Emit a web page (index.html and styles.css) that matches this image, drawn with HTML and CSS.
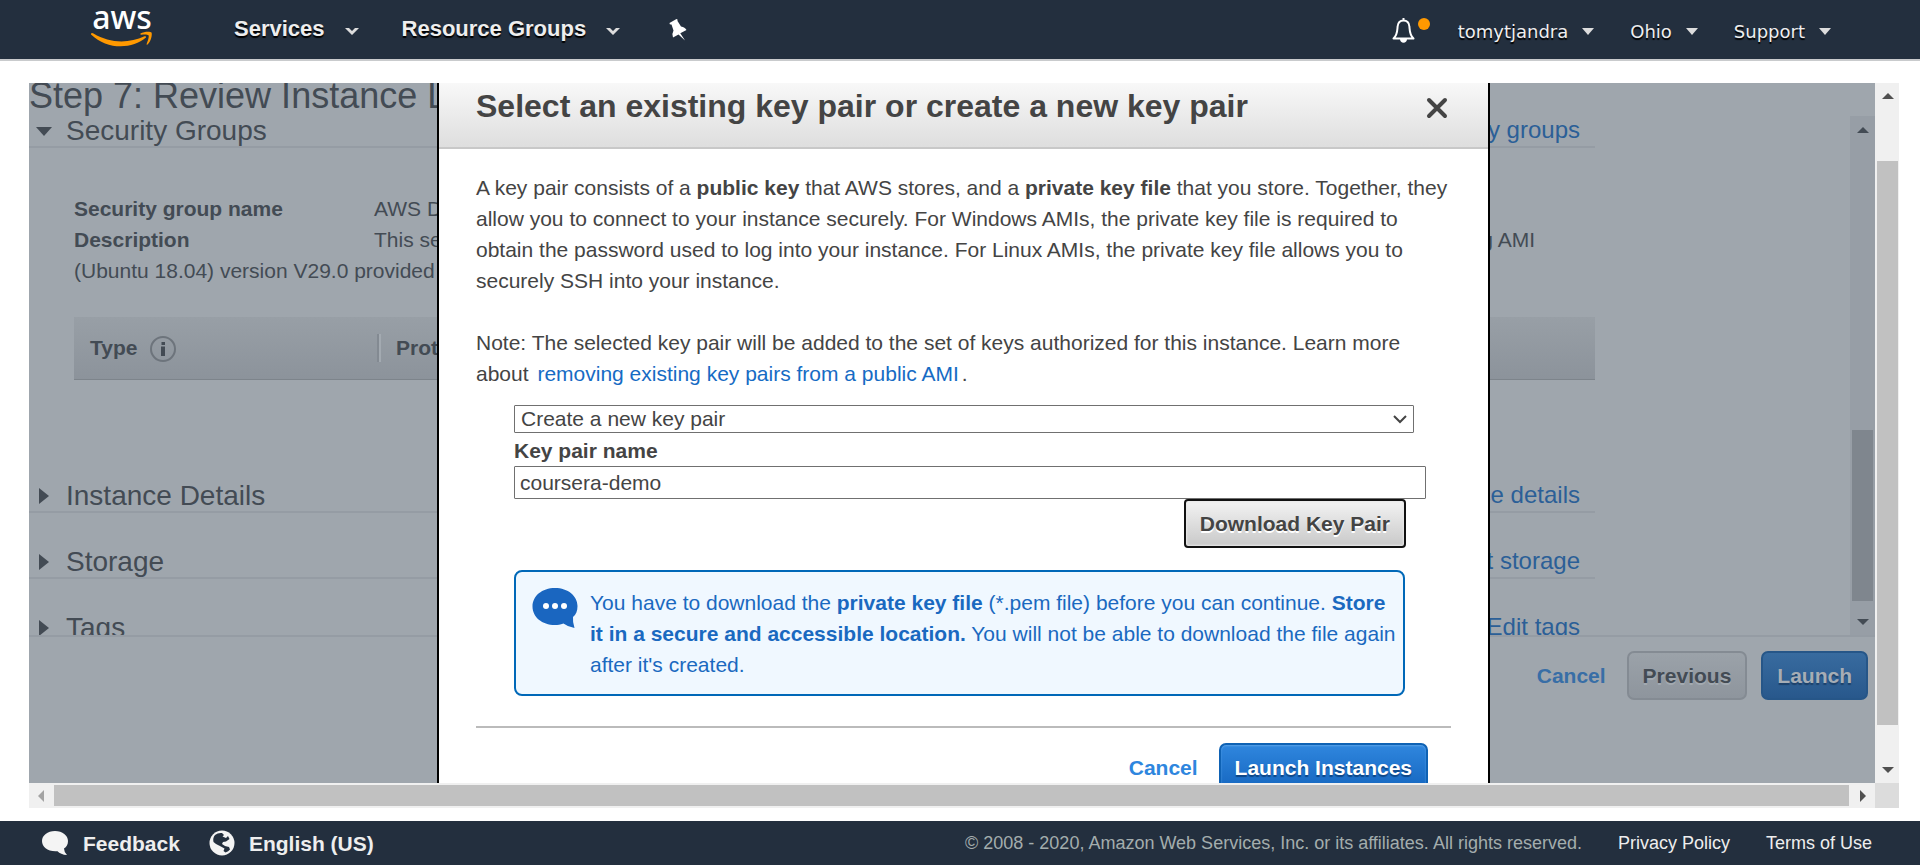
FILE: index.html
```html
<!DOCTYPE html>
<html lang="en">
<head>
<meta charset="utf-8">
<title>Launch instance - Review</title>
<link rel="stylesheet" href="styles.css">
</head>
<body>
<header class="topbar">
  <a class="logo" href="#" aria-label="aws home">
    <svg width="64" height="44" viewBox="0 0 64 44">
      <text class="logo-word" x="32" y="26" text-anchor="middle">aws</text>
      <path class="logo-smile" d="M1 30.500 Q2 29.500 3.500 30.500 C20 40.500 39 40.500 54.500 33.200 Q56.500 32.800 56 34.600 C42 46.500 17 47 1 31.500Z"/>
      <path class="logo-smile" d="M50.500 30.600 C54 28.200 60.500 28.200 61.500 29.500 C62.500 31.500 61 38.500 57.500 41.500 C56.800 42 56.300 41.700 56.700 40.800 C58 37.500 59.300 33.500 58.500 32.300 C57.500 31.200 54 31.400 51.200 31.700 C50.300 31.700 50 31.100 50.500 30.600Z"/>
    </svg>
  </a>
  <nav class="main-menu">
    <button class="menu-button" type="button">Services
      <svg width="14" height="8" viewBox="0 0 14 8"><path d="M0 1 H4 L7 4 L10 1 H14 L7 8Z"/></svg>
    </button>
    <button class="menu-button" type="button">Resource Groups
      <svg width="14" height="8" viewBox="0 0 14 8"><path d="M0 1 H4 L7 4 L10 1 H14 L7 8Z"/></svg>
    </button>
    <button class="menu-button" type="button" aria-label="Pin shortcuts">
      <svg class="pin" width="20" height="24" viewBox="0 0 20 24"><path d="M1.500 5 L8.500 1 Q10 1 9.500 3 L13 8.500 Q17 9 18.500 12 L12.300 15.300 L17 22.500 L10.500 16.500 L5 19.500 Q3.500 16 5.500 12.500 L3.500 6.500 Q1.500 7 1.500 5Z"/></svg>
    </button>
  </nav>
  <nav class="account-menu">
    <button class="bell" type="button" aria-label="Notifications">
      <svg width="40" height="28" viewBox="0 0 40 28">
        <path class="bell-line" d="M2.500 22.500 C6.500 19 6.200 15 6.600 10.500 C7 6.500 9 4.500 12.500 4.500 C16 4.500 18 6.500 18.400 10.500 C18.800 15 18.500 19 22.500 22.500Z M12.500 4.500 V2"/>
        <path class="bell-clap" d="M9 23 H16 C16 28 9 28 9 23Z"/>
        <circle class="bell-dot" cx="33" cy="8" r="6"/>
      </svg>
    </button>
    <button class="account-button" type="button">tomytjandra
      <svg width="12" height="7" viewBox="0 0 12 7"><path d="M0 0 H12 L6 7Z"/></svg>
    </button>
    <button class="account-button" type="button">Ohio
      <svg width="12" height="7" viewBox="0 0 12 7"><path d="M0 0 H12 L6 7Z"/></svg>
    </button>
    <button class="account-button" type="button">Support
      <svg width="12" height="7" viewBox="0 0 12 7"><path d="M0 0 H12 L6 7Z"/></svg>
    </button>
  </nav>
</header>

<main class="workspace">
  <div class="frame">
    <div class="view">
      <h1 class="page-title">Step 7: Review Instance Launch</h1>
      <div class="review">
        <div class="review-content">
          <section class="group">
            <div class="group-head">
              <h2 class="group-title"><span class="tri tri-down"></span>Security Groups</h2>
              <a class="edit-link" href="#">Edit security groups</a>
            </div>
            <div class="group-body">
              <p class="fact"><b class="fact-name">Security group name</b>AWS Deep Learning AMI</p>
              <p class="fact"><b class="fact-name">Description</b>This security group was generated by AWS Marketplace and is based on recommended settings for AWS Deep Learning AMI (Ubuntu 18.04) version V29.0 provided by Amazon Web Services</p>
              <table class="rules">
                <thead>
                  <tr>
                    <th>Type <svg class="info" width="26" height="26" viewBox="0 0 26 26"><circle cx="13" cy="13" r="12"/><path d="M11 10.500 H15 V20 H11Z M11.500 6 H15 V9 H11.500Z"/></svg></th>
                    <th>Protocol</th>
                    <th>Port Range</th>
                    <th>Source</th>
                  </tr>
                </thead>
              </table>
            </div>
          </section>
          <section class="group">
            <div class="group-head">
              <h2 class="group-title"><span class="tri tri-right"></span>Instance Details</h2>
              <a class="edit-link" href="#">Edit instance details</a>
            </div>
          </section>
          <section class="group">
            <div class="group-head">
              <h2 class="group-title"><span class="tri tri-right"></span>Storage</h2>
              <a class="edit-link" href="#">Edit storage</a>
            </div>
          </section>
          <section class="group">
            <div class="group-head">
              <h2 class="group-title"><span class="tri tri-right"></span>Tags</h2>
              <a class="edit-link" href="#">Edit tags</a>
            </div>
          </section>
        </div>
        <div class="bar bar-dim">
          <span class="arrow arrow-up"></span>
          <span class="thumb thumb-review"></span>
          <span class="arrow arrow-down"></span>
        </div>
      </div>
      <div class="wizard-actions">
        <a class="cancel cancel-dim" href="#">Cancel</a>
        <button class="btn btn-dim" type="button">Previous</button>
        <button class="btn btn-dim-primary" type="button">Launch</button>
      </div>

      <div class="modal" role="dialog" aria-labelledby="modal-title">
        <div class="modal-head">
          <h2 class="modal-title" id="modal-title">Select an existing key pair or create a new key pair</h2>
          <button class="close" type="button" aria-label="Close">
            <svg width="22" height="22" viewBox="0 0 22 22"><path d="M3 3 L19 19 M19 3 L3 19"/></svg>
          </button>
        </div>
        <div class="modal-body">
          <p class="para">A key pair consists of a <b>public key</b> that AWS stores, and a <b>private key file</b> that you store. Together, they allow you to connect to your instance securely. For Windows AMIs, the private key file is required to obtain the password used to log into your instance. For Linux AMIs, the private key file allows you to securely SSH into your instance.</p>
          <p class="para">Note: The selected key pair will be added to the set of keys authorized for this instance. Learn more about <a class="doc-link" href="#">removing existing key pairs from a public AMI</a>.</p>
          <form class="form">
            <div class="select-wrap">
              <select class="select" aria-label="Key pair choice"><option>Create a new key pair</option></select>
              <svg class="select-arrow" width="14" height="9" viewBox="0 0 14 9"><path d="M1 1 L7 7 L13 1"/></svg>
            </div>
            <label class="label" for="key-name">Key pair name</label>
            <input class="input" id="key-name" type="text" value="coursera-demo">
            <button class="btn btn-download" type="button">Download Key Pair</button>
            <div class="notice">
              <svg class="notice-icon" width="46" height="42" viewBox="0 0 46 42">
                <path d="M23 1 C36 1 45.500 9 45.500 19 C45.500 24 44 27.500 41 30 Q40.500 35 42.500 41 Q36 40 31.500 36.500 C28 37.800 26 38 23 38 C10 38 .5 30 .5 19.500 C.5 9 10 1 23 1Z"/>
                <circle cx="14" cy="19" r="3"/><circle cx="23" cy="19" r="3"/><circle cx="32" cy="19" r="3"/>
              </svg>
              <p class="notice-text">You have to download the <b>private key file</b> (*.pem file) before you can continue. <b>Store it in a secure and accessible location.</b> You will not be able to download the file again after it's created.</p>
            </div>
          </form>
          <div class="modal-actions">
            <a class="cancel" href="#">Cancel</a>
            <button class="btn btn-primary" type="button">Launch Instances</button>
          </div>
        </div>
      </div>
    </div>
    <div class="bar">
      <span class="arrow arrow-up"></span>
      <span class="thumb thumb-page"></span>
      <span class="arrow arrow-down"></span>
    </div>
    <div class="bar bar-across">
      <span class="arrow arrow-left"></span>
      <span class="thumb"></span>
      <span class="arrow arrow-right"></span>
    </div>
    <div class="corner"></div>
  </div>
</main>

<footer class="footer">
  <a class="foot-link" href="#">
    <svg width="27" height="26" viewBox="0 0 27 26"><path d="M13 1 C20.500 1 26 5.500 26 11 C26 14.500 24.500 17 22 18.500 Q22 22 25 25 Q18.500 24.500 15.500 21.200 C6 22 0 17 0 11 C0 5.500 5.500 1 13 1Z"/></svg>
    Feedback
  </a>
  <a class="foot-link" href="#">
    <svg width="26" height="26" viewBox="0 0 26 26"><circle cx="13" cy="13" r="12.500"/><path class="globe-sea" d="M6 5 Q9 2.500 13 3 L15 5 L13.500 6.500 L17 8 L19 6 L20.500 9 L17 11.500 L14 12 L13 14 L16 16 L20 17 L21 19.500 Q19.500 21.500 16.500 22.500 L14.500 21 L15.500 18.500 L10 15.500 L7 14 L4.500 12 Q3.500 8 6 5Z"/></svg>
    English (US)
  </a>
  <span class="legal">© 2008 - 2020, Amazon Web Services, Inc. or its affiliates. All rights reserved.</span>
  <a class="policy" href="#">Privacy Policy</a>
  <a class="policy" href="#">Terms of Use</a>
</footer>
</body>
</html>
```
FILE: styles.css
```css
* { box-sizing: border-box; }

body {
  margin: 0;
  height: 100vh;
  display: flex;
  flex-direction: column;
  overflow: hidden;
  background: #fff;
  color: #444;
  font: 21px/31px "Liberation Sans", Arial, sans-serif;
}

a { text-decoration: none; }
h1, h2, p { margin: 0; font-weight: normal; }
button { font: inherit; margin: 0; }
svg { display: block; flex: none; }

/* Top bar */
.topbar {
  flex: none;
  display: flex;
  height: 61px;
  padding: 0 89px 0 90px;
  background: #232f3e;
  border-bottom: 2px solid #c9cbcd;
}
.logo { padding-top: 3px; }
.logo svg { overflow: visible; }
.logo-word { font: 500 32px "Noto Sans", sans-serif; fill: #fff; }
.logo-smile { fill: #ff9900; }
.main-menu { display: flex; gap: 43px; margin-left: 80px; }
.menu-button, .account-button, .bell {
  display: flex;
  align-items: center;
  border: 0;
  padding: 0;
  background: none;
  color: #eee;
  text-shadow: 0 2px 1px #000;
}
.menu-button { gap: 20px; padding-bottom: 3px; font-weight: bold; font-size: 22px; }
.menu-button svg { fill: #ddd; margin-top: 6px; }
.menu-button .pin { fill: #fff; margin: 4px 0 0 5px; }
.account-menu { display: flex; gap: 36px; margin-left: auto; }
.account-button { gap: 14px; padding-top: 4px; font: 18px "DejaVu Sans", sans-serif; }
.account-button svg { fill: #ddd; }
.bell { margin-right: -9px; }
.bell-line { fill: none; stroke: #fff; stroke-width: 2; stroke-linejoin: round; }
.bell-clap { fill: #fff; }
.bell-dot { fill: #ff9900; }

/* Framed console with its scroll bars */
.workspace { flex: 1; min-height: 0; padding: 22px 21px 13px 29px; }
.frame {
  display: grid;
  grid-template: minmax(0, 1fr) 25px / minmax(0, 1fr) 24px;
  height: 100%;
}
.view {
  position: relative;
  display: flex;
  flex-direction: column;
  overflow: hidden;
  background: #9fa6ad;
  color: #434b54;
}
.bar {
  display: flex;
  flex-direction: column;
  align-items: center;
  flex: none;
  padding: 10px 1px 10px 2px;
  background: #f0f0f0;
}
.bar-dim { width: 25px; padding: 11px 2px 10px; background: #979ea6; }
.bar-across { flex-direction: row; padding: 2px 9px; }
.corner { background: #dcdcdc; }
.thumb { flex: 1; align-self: stretch; background: #c1c1c1; }
.thumb-page { margin: 62px 0 42px; }
.thumb-review { margin: 297px 0 18px; background: #7f868e; }
.bar-across .thumb { margin: 0 11px 0 10px; }
.arrow { border: 0 solid transparent; }
.arrow-up { border-width: 0 6px 6px; border-bottom-color: #505050; }
.arrow-down { border-width: 6px 6px 0; border-top-color: #505050; }
.arrow-left { border-width: 6px 6px 6px 0; border-right-color: #a3a3a3; }
.arrow-right { border-width: 6px 0 6px 6px; border-left-color: #505050; }
.bar-dim .arrow-up { border-bottom-color: #434b54; }
.bar-dim .arrow-down { border-top-color: #434b54; }

/* Review step behind the dialog */
.page-title { flex: none; font-size: 36px; line-height: 25px; padding-bottom: 8px; white-space: nowrap; }
.review { flex: 1; min-height: 0; display: flex; overflow: hidden; }
.review-content { flex: 1; padding-right: 255px; }
.group { margin-bottom: 34px; }
.group-head {
  display: flex;
  justify-content: space-between;
  align-items: flex-start;
  padding-right: 15px;
  border-bottom: 2px solid #959ca4;
}
.group-title { display: flex; align-items: center; font-size: 28px; line-height: 30px; }
.tri { width: 37px; }
.tri::before { content: ""; display: block; width: 0; border: 0 solid transparent; }
.tri-down::before { margin-left: 7px; border-width: 9px 8px 0; border-top-color: #434b54; }
.tri-right::before { margin-left: 10px; border-width: 8px 0 8px 10px; border-left-color: #434b54; }
.edit-link { color: #2b5f97; font-size: 24px; line-height: 27px; }
.group-body { padding: 45px 0 67px 45px; }
.fact-name { display: inline-block; width: 300px; }
.rules { width: 100%; height: 63px; margin-top: 31px; border-collapse: collapse; table-layout: fixed; }
.rules thead { background: linear-gradient(#989fa6, #8c939b); border-bottom: 1px solid #7d848b; }
.rules th { padding: 0 16px; text-align: left; line-height: 28px; }
.rules th:first-child { width: 303px; }
.rules th + th { padding-left: 19px; background: linear-gradient(90deg, #838a92 2px, #a3aab1 2px) left center / 4px 28px no-repeat; }
.info { display: inline-block; vertical-align: middle; margin-left: 7px; fill: #434b54; }
.info circle { fill: none; stroke: #6d747c; stroke-width: 2; }
.wizard-actions {
  flex: none;
  display: flex;
  justify-content: flex-end;
  align-items: flex-start;
  height: 148px;
  padding: 14px 7px;
  border-top: 2px solid #959ca4;
}

/* Buttons */
.btn {
  height: 49px;
  padding: 0 14px;
  border: 2px solid;
  border-radius: 7px;
  font-weight: bold;
  line-height: 31px;
}
.btn-dim {
  margin-right: 14px;
  color: #434b54;
  border-color: #848b93;
  background: linear-gradient(#9ba2a9, #8e959d);
  text-shadow: 0 2px 0 #a3aab1;
}
.btn-dim-primary {
  color: #a6adb5;
  border-color: #265688;
  background: linear-gradient(#386b9f, #28588c);
  text-shadow: 0 2px 1px #1d416a;
}
.btn-primary {
  color: #fff;
  border-color: #0f62b4;
  background: linear-gradient(#2f86de, #1566bf);
  box-shadow: inset 0 1px 2px #5aa2e8;
  text-shadow: 0 2px 1px #0d4585;
}
.btn-download {
  align-self: flex-end;
  margin-right: 20px;
  color: #444;
  border-color: #111;
  border-radius: 4px;
  background: linear-gradient(#f3f3f3, #c9c9c9);
  box-shadow: inset 0 0 2px 1px #e8e8e8;
  text-shadow: 0 2px 0 #fff;
}
.cancel { margin-right: 21px; color: #2e86de; font-weight: bold; line-height: 49px; }
.cancel-dim { color: #386ea6; }

/* Dialog */
.modal {
  position: absolute;
  top: 0;
  left: 408px;
  right: 385px;
  min-height: 100%;
  border: solid #000;
  border-width: 0 2px;
  background: #fff;
  color: #444;
}
.modal-head {
  display: flex;
  justify-content: space-between;
  height: 66px;
  padding: 0 40px 0 37px;
  background: linear-gradient(#f8f8f8, #dedede);
  border-bottom: 2px solid #c8c8c8;
}
.modal-title { font-size: 32px; line-height: 46px; font-weight: bold; white-space: nowrap; }
.close { align-self: flex-start; margin-top: 14px; padding: 0; border: 0; background: none; }
.close svg { fill: none; stroke: #444; stroke-width: 4; stroke-linecap: round; }
.modal-body { padding: 23px 37px 40px; }
.para + .para { margin-top: 31px; }
.doc-link { margin: 0 3px; color: #166bc4; }
.form { display: flex; flex-direction: column; margin: 16px 25px 30px 38px; }
.select-wrap { position: relative; margin-right: 12px; height: 28px; }
.select {
  appearance: none;
  display: block;
  width: 100%;
  height: 28px;
  padding: 0 6px;
  border: 1px solid #707070;
  border-radius: 1px;
  background: #fff;
  color: #444;
  font: inherit;
  line-height: 26px;
}
.select-arrow { position: absolute; right: 7px; top: 10px; fill: none; stroke: #444; stroke-width: 2; pointer-events: none; }
.label { margin-top: 2px; font-weight: bold; }
.input {
  width: 100%;
  height: 33px;
  padding: 0 5px;
  border: 1px solid #707070;
  border-radius: 1px;
  background: #fff;
  color: #444;
  font: inherit;
}
.notice {
  display: flex;
  gap: 12px;
  margin: 22px 21px 0 0;
  padding: 15px 0 14px 16px;
  border: 2px solid #0068b8;
  border-radius: 8px;
  background: #f0f8ff;
  color: #1a69c0;
}
.notice-icon { fill: #1a66c0; }
.notice-icon circle { fill: #fff; }
.modal-actions {
  display: flex;
  justify-content: flex-end;
  padding: 15px 23px 0 0;
  border-top: 2px solid #bbb;
}

/* Footer */
.footer {
  flex: none;
  display: flex;
  align-items: center;
  height: 44px;
  padding: 0 48px 0 42px;
  background: #232f3e;
  color: #a3adad;
  font-size: 18px;
}
.foot-link { display: flex; align-items: center; gap: 14px; margin-right: 29px; color: #eee; font-size: 21px; font-weight: bold; }
.foot-link svg { fill: #f4f4f4; }
.foot-link .globe-sea { fill: #232f3e; }
.legal { margin-left: auto; }
.policy { margin-left: 36px; color: #eee; }
```
